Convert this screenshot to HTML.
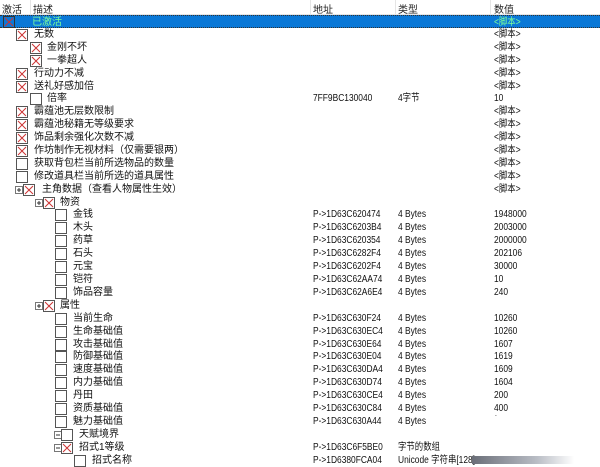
<!DOCTYPE html>
<html><head><meta charset="utf-8"><style>
body{margin:0;width:600px;height:465px;overflow:hidden;background:#fff;font-family:"Liberation Sans","Noto Sans CJK SC",sans-serif;font-size:10px;color:#111;position:relative}
.h{position:absolute;top:0;left:0;width:600px;height:14px;background:#fff;border-bottom:1px solid #e5e5e5}
.h span{position:absolute;top:1px;color:#222}
.hs{position:absolute;top:0;width:1px;height:14px;background:#e5e5e5}
.r{position:absolute;left:0;width:600px;height:13px;line-height:13px}
.r span{position:absolute;top:0;white-space:nowrap}
.sel{background:#0a78d7;border-top:1px dotted #333;border-bottom:1px dotted #333;box-sizing:border-box}
.sel span{color:#7dff9a}
svg{position:absolute;top:1px}
.a{left:313px}.t{left:398px}.v{left:494px}
.a,.t,.v{transform:scaleX(0.84);transform-origin:0 0}
</style></head><body>
<div class="h"><span style="left:2px">激活</span><span style="left:33px">描述</span><span style="left:313px">地址</span><span style="left:398px">类型</span><span style="left:494px">数值</span>
<div class="hs" style="left:30px"></div><div class="hs" style="left:310px"></div><div class="hs" style="left:395px"></div><div class="hs" style="left:490px"></div></div>

<div class="r sel" style="top:15px"><svg style="left:3px;top:0" width="12" height="12"><rect x=".5" y=".5" width="11" height="11" fill="none" stroke="#333"/><path d="M2 2L10 10M10 2L2 10" stroke="#c33"/></svg><span style="left:32px">已激活</span><span class="v">&lt;脚本&gt;</span></div>

<div class="r" style="top:28px"><svg style="left:16px" width="12" height="12"><rect x=".5" y=".5" width="11" height="11" fill="#fff" stroke="#555"/><path d="M2 2L10 10M10 2L2 10" stroke="#c33"/></svg><span style="left:34px">无数</span><span class="v">&lt;脚本&gt;</span></div>
<div class="r" style="top:41px"><svg style="left:30px" width="12" height="12"><rect x=".5" y=".5" width="11" height="11" fill="#fff" stroke="#555"/><path d="M2 2L10 10M10 2L2 10" stroke="#c33"/></svg><span style="left:47px">金刚不坏</span><span class="v">&lt;脚本&gt;</span></div>
<div class="r" style="top:54px"><svg style="left:30px" width="12" height="12"><rect x=".5" y=".5" width="11" height="11" fill="#fff" stroke="#555"/><path d="M2 2L10 10M10 2L2 10" stroke="#c33"/></svg><span style="left:47px">一拳超人</span><span class="v">&lt;脚本&gt;</span></div>
<div class="r" style="top:67px"><svg style="left:16px" width="12" height="12"><rect x=".5" y=".5" width="11" height="11" fill="#fff" stroke="#555"/><path d="M2 2L10 10M10 2L2 10" stroke="#c33"/></svg><span style="left:34px">行动力不减</span><span class="v">&lt;脚本&gt;</span></div>
<div class="r" style="top:80px"><svg style="left:16px" width="12" height="12"><rect x=".5" y=".5" width="11" height="11" fill="#fff" stroke="#555"/><path d="M2 2L10 10M10 2L2 10" stroke="#c33"/></svg><span style="left:34px">送礼好感加倍</span><span class="v">&lt;脚本&gt;</span></div>
<div class="r" style="top:92px"><svg style="left:30px" width="12" height="12"><rect x=".5" y=".5" width="11" height="11" fill="#fff" stroke="#555"/></svg><span style="left:47px">倍率</span><span class="a">7FF9BC130040</span><span class="t">4字节</span><span class="v">10</span></div>
<div class="r" style="top:105px"><svg style="left:16px" width="12" height="12"><rect x=".5" y=".5" width="11" height="11" fill="#fff" stroke="#555"/><path d="M2 2L10 10M10 2L2 10" stroke="#c33"/></svg><span style="left:34px">霸蕴池无层数限制</span><span class="v">&lt;脚本&gt;</span></div>
<div class="r" style="top:118px"><svg style="left:16px" width="12" height="12"><rect x=".5" y=".5" width="11" height="11" fill="#fff" stroke="#555"/><path d="M2 2L10 10M10 2L2 10" stroke="#c33"/></svg><span style="left:34px">霸蕴池秘籍无等级要求</span><span class="v">&lt;脚本&gt;</span></div>
<div class="r" style="top:131px"><svg style="left:16px" width="12" height="12"><rect x=".5" y=".5" width="11" height="11" fill="#fff" stroke="#555"/><path d="M2 2L10 10M10 2L2 10" stroke="#c33"/></svg><span style="left:34px">饰品剩余强化次数不减</span><span class="v">&lt;脚本&gt;</span></div>
<div class="r" style="top:144px"><svg style="left:16px" width="12" height="12"><rect x=".5" y=".5" width="11" height="11" fill="#fff" stroke="#555"/><path d="M2 2L10 10M10 2L2 10" stroke="#c33"/></svg><span style="left:34px">作坊制作无视材料（仅需要银两）</span><span class="v">&lt;脚本&gt;</span></div>
<div class="r" style="top:157px"><svg style="left:16px" width="12" height="12"><rect x=".5" y=".5" width="11" height="11" fill="#fff" stroke="#555"/></svg><span style="left:34px">获取背包栏当前所选物品的数量</span><span class="v">&lt;脚本&gt;</span></div>
<div class="r" style="top:170px"><svg style="left:16px" width="12" height="12"><rect x=".5" y=".5" width="11" height="11" fill="#fff" stroke="#555"/></svg><span style="left:34px">修改道具栏当前所选的道具属性</span><span class="v">&lt;脚本&gt;</span></div>
<div class="r" style="top:183px"><svg style="left:15px;top:3px" width="8" height="8"><rect x=".5" y=".5" width="7" height="7" fill="#fff" stroke="#777"/><path d="M2 4H6M4 2V6" stroke="#333"/></svg><svg style="left:23px" width="12" height="12"><rect x=".5" y=".5" width="11" height="11" fill="#fff" stroke="#555"/><path d="M2 2L10 10M10 2L2 10" stroke="#c33"/></svg><span style="left:42px">主角数据（查看人物属性生效）</span><span class="v">&lt;脚本&gt;</span></div>
<div class="r" style="top:196px"><svg style="left:35px;top:3px" width="8" height="8"><rect x=".5" y=".5" width="7" height="7" fill="#fff" stroke="#777"/><path d="M2 4H6M4 2V6" stroke="#333"/></svg><svg style="left:43px" width="12" height="12"><rect x=".5" y=".5" width="11" height="11" fill="#fff" stroke="#555"/><path d="M2 2L10 10M10 2L2 10" stroke="#c33"/></svg><span style="left:60px">物资</span></div>
<div class="r" style="top:208px"><svg style="left:55px" width="12" height="12"><rect x=".5" y=".5" width="11" height="11" fill="#fff" stroke="#555"/></svg><span style="left:73px">金钱</span><span class="a">P-&gt;1D63C620474</span><span class="t">4 Bytes</span><span class="v">1948000</span></div>
<div class="r" style="top:221px"><svg style="left:55px" width="12" height="12"><rect x=".5" y=".5" width="11" height="11" fill="#fff" stroke="#555"/></svg><span style="left:73px">木头</span><span class="a">P-&gt;1D63C6203B4</span><span class="t">4 Bytes</span><span class="v">2003000</span></div>
<div class="r" style="top:234px"><svg style="left:55px" width="12" height="12"><rect x=".5" y=".5" width="11" height="11" fill="#fff" stroke="#555"/></svg><span style="left:73px">药草</span><span class="a">P-&gt;1D63C620354</span><span class="t">4 Bytes</span><span class="v">2000000</span></div>
<div class="r" style="top:247px"><svg style="left:55px" width="12" height="12"><rect x=".5" y=".5" width="11" height="11" fill="#fff" stroke="#555"/></svg><span style="left:73px">石头</span><span class="a">P-&gt;1D63C6282F4</span><span class="t">4 Bytes</span><span class="v">202106</span></div>
<div class="r" style="top:260px"><svg style="left:55px" width="12" height="12"><rect x=".5" y=".5" width="11" height="11" fill="#fff" stroke="#555"/></svg><span style="left:73px">元宝</span><span class="a">P-&gt;1D63C6202F4</span><span class="t">4 Bytes</span><span class="v">30000</span></div>
<div class="r" style="top:273px"><svg style="left:55px" width="12" height="12"><rect x=".5" y=".5" width="11" height="11" fill="#fff" stroke="#555"/></svg><span style="left:73px">铠符</span><span class="a">P-&gt;1D63C62AA74</span><span class="t">4 Bytes</span><span class="v">10</span></div>
<div class="r" style="top:286px"><svg style="left:55px" width="12" height="12"><rect x=".5" y=".5" width="11" height="11" fill="#fff" stroke="#555"/></svg><span style="left:73px">饰品容量</span><span class="a">P-&gt;1D63C62A6E4</span><span class="t">4 Bytes</span><span class="v">240</span></div>
<div class="r" style="top:299px"><svg style="left:35px;top:3px" width="8" height="8"><rect x=".5" y=".5" width="7" height="7" fill="#fff" stroke="#777"/><path d="M2 4H6M4 2V6" stroke="#333"/></svg><svg style="left:43px" width="12" height="12"><rect x=".5" y=".5" width="11" height="11" fill="#fff" stroke="#555"/><path d="M2 2L10 10M10 2L2 10" stroke="#c33"/></svg><span style="left:60px">属性</span></div>
<div class="r" style="top:312px"><svg style="left:55px" width="12" height="12"><rect x=".5" y=".5" width="11" height="11" fill="#fff" stroke="#555"/></svg><span style="left:73px">当前生命</span><span class="a">P-&gt;1D63C630F24</span><span class="t">4 Bytes</span><span class="v">10260</span></div>
<div class="r" style="top:325px"><svg style="left:55px" width="12" height="12"><rect x=".5" y=".5" width="11" height="11" fill="#fff" stroke="#555"/></svg><span style="left:73px">生命基础值</span><span class="a">P-&gt;1D63C630EC4</span><span class="t">4 Bytes</span><span class="v">10260</span></div>
<div class="r" style="top:338px"><svg style="left:55px" width="12" height="12"><rect x=".5" y=".5" width="11" height="11" fill="#fff" stroke="#555"/></svg><span style="left:73px">攻击基础值</span><span class="a">P-&gt;1D63C630E64</span><span class="t">4 Bytes</span><span class="v">1607</span></div>
<div class="r" style="top:350px"><svg style="left:55px" width="12" height="12"><rect x=".5" y=".5" width="11" height="11" fill="#fff" stroke="#555"/></svg><span style="left:73px">防御基础值</span><span class="a">P-&gt;1D63C630E04</span><span class="t">4 Bytes</span><span class="v">1619</span></div>
<div class="r" style="top:363px"><svg style="left:55px" width="12" height="12"><rect x=".5" y=".5" width="11" height="11" fill="#fff" stroke="#555"/></svg><span style="left:73px">速度基础值</span><span class="a">P-&gt;1D63C630DA4</span><span class="t">4 Bytes</span><span class="v">1609</span></div>
<div class="r" style="top:376px"><svg style="left:55px" width="12" height="12"><rect x=".5" y=".5" width="11" height="11" fill="#fff" stroke="#555"/></svg><span style="left:73px">内力基础值</span><span class="a">P-&gt;1D63C630D74</span><span class="t">4 Bytes</span><span class="v">1604</span></div>
<div class="r" style="top:389px"><svg style="left:55px" width="12" height="12"><rect x=".5" y=".5" width="11" height="11" fill="#fff" stroke="#555"/></svg><span style="left:73px">丹田</span><span class="a">P-&gt;1D63C630CE4</span><span class="t">4 Bytes</span><span class="v">200</span></div>
<div class="r" style="top:402px"><svg style="left:55px" width="12" height="12"><rect x=".5" y=".5" width="11" height="11" fill="#fff" stroke="#555"/></svg><span style="left:73px">资质基础值</span><span class="a">P-&gt;1D63C630C84</span><span class="t">4 Bytes</span><span class="v">400</span></div>
<div class="r" style="top:415px;overflow:hidden"><svg style="left:55px" width="12" height="12"><rect x=".5" y=".5" width="11" height="11" fill="#fff" stroke="#555"/></svg><span style="left:73px">魅力基础值</span><span class="a">P-&gt;1D63C630A44</span><span class="t">4 Bytes</span><span class="v" style="top:-8px;color:#555">7</span></div>
<div class="r" style="top:428px"><svg style="left:54px;top:3px" width="8" height="8"><rect x=".5" y=".5" width="7" height="7" fill="#fff" stroke="#777"/><path d="M2 4H6" stroke="#333"/></svg><svg style="left:61px" width="12" height="12"><rect x=".5" y=".5" width="11" height="11" fill="#fff" stroke="#555"/></svg><span style="left:79px">天赋境界</span></div>
<div class="r" style="top:441px"><svg style="left:54px;top:3px" width="8" height="8"><rect x=".5" y=".5" width="7" height="7" fill="#fff" stroke="#777"/><path d="M2 4H6" stroke="#333"/></svg><svg style="left:61px" width="12" height="12"><rect x=".5" y=".5" width="11" height="11" fill="#fff" stroke="#555"/><path d="M2 2L10 10M10 2L2 10" stroke="#c33"/></svg><span style="left:79px">招式1等级</span><span class="a">P-&gt;1D63C6F5BE0</span><span class="t">字节的数组</span></div>
<div class="r" style="top:454px"><svg style="left:74px" width="12" height="12"><rect x=".5" y=".5" width="11" height="11" fill="#fff" stroke="#555"/></svg><span style="left:92px">招式名称</span><span class="a">P-&gt;1D6380FCA04</span><span class="t">Unicode 字符串[128]</span><div style="position:absolute;left:472px;top:2px;width:128px;height:8px;background:linear-gradient(to right,#6a6e78,#b8bcc4 50%,#fff 80%)"></div></div>
</body></html>
